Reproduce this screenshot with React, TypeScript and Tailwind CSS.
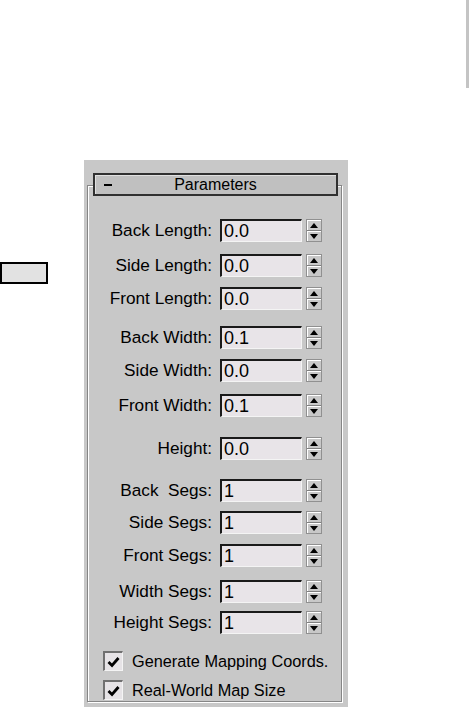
import React from "react";

const rows: { label: string; value: string; mt: string }[] = [
  { label: "Back Length:", value: "0.0", mt: "mt-[33px]" },
  { label: "Side Length:", value: "0.0", mt: "mt-[12px]" },
  { label: "Front Length:", value: "0.0", mt: "mt-[10px]" },
  { label: "Back Width:", value: "0.1", mt: "mt-[16px]" },
  { label: "Side Width:", value: "0.0", mt: "mt-[10px]" },
  { label: "Front Width:", value: "0.1", mt: "mt-[12px]" },
  { label: "Height:", value: "0.0", mt: "mt-[20px]" },
  { label: "Back  Segs:", value: "1", mt: "mt-[19px]" },
  { label: "Side Segs:", value: "1", mt: "mt-[9px]" },
  { label: "Front Segs:", value: "1", mt: "mt-[10px]" },
  { label: "Width Segs:", value: "1", mt: "mt-[13px]" },
  { label: "Height Segs:", value: "1", mt: "mt-[8px]" },
];

function Spinner() {
  return (
    <div className="flex h-[23px] w-[16px] flex-col border border-[#909090] bg-[#c8c8c8]">
      <div className="flex flex-1 items-center justify-center border-b border-[#808080] shadow-[inset_1px_1px_0_#fff]">
        <svg width="8" height="5" viewBox="0 0 8 5">
          <polygon points="4,0 8,5 0,5" fill="#000" />
        </svg>
      </div>
      <div className="flex flex-1 items-center justify-center shadow-[inset_1px_1px_0_#fff]">
        <svg width="8" height="5" viewBox="0 0 8 5">
          <polygon points="0,0 8,0 4,5" fill="#000" />
        </svg>
      </div>
    </div>
  );
}

function Row({ label, value, mt }: { label: string; value: string; mt: string }) {
  return (
    <div className={`flex h-[23px] items-center ${mt}`}>
      <div className="w-[124px] whitespace-pre text-right text-[17.2px] leading-none">{label}</div>
      <div className="ml-[8px] flex h-[23px] w-[82px] items-center border-l-2 border-t-2 border-b border-r border-l-[#1a1a1a] border-t-[#1a1a1a] border-b-[#f4f4f4] border-r-[#f4f4f4] bg-[#e8e4e8] pl-[2px] text-[18px] leading-none">
        {value}
      </div>
      <div className="ml-[4px]">
        <Spinner />
      </div>
    </div>
  );
}

function Check({ label, mt }: { label: string; mt: string }) {
  return (
    <div className={`flex h-[20px] items-center ${mt}`}>
      <div className="ml-[15px] flex h-[20px] w-[20px] items-center justify-center border-l-2 border-t-2 border-b border-r border-l-[#707070] border-t-[#707070] border-b-[#f4f4f4] border-r-[#f4f4f4] bg-[#e6e3e6]">
        <svg width="13" height="12" viewBox="0 0 13 12">
          <polyline points="1.5,6 5,9.5 11.5,2" fill="none" stroke="#000" strokeWidth="2.8" />
        </svg>
      </div>
      <div className="ml-[9px] text-[16.3px] leading-none">{label}</div>
    </div>
  );
}

export default function App() {
  return (
    <div
      className="flex h-[721px] w-[469px] items-start overflow-hidden bg-white text-black"
      style={{ fontFamily: '"Liberation Sans", Arial, sans-serif' }}
    >
      <div className="mt-[262px] h-[22px] w-[48px] border-2 border-black bg-[#e2e2e2]" />
      <div className="relative ml-[36px] mt-[160px] h-[547px] w-[264px] bg-[#c8c8c8]">
        <div className="ml-[3px] mt-[25px] h-[517px] w-[255px] border border-[#868686] shadow-[inset_1px_1px_0_#fff,1px_1px_0_#fff]">
          {rows.map((r) => (
            <Row key={r.label} {...r} />
          ))}
          <Check label="Generate Mapping Coords." mt="mt-[17px]" />
          <Check label="Real-World Map Size" mt="mt-[9px]" />
        </div>
        <div className="absolute left-[9px] top-[13px] flex h-[23px] w-[245px] items-center border-2 border-[#303030] bg-[#c0c0c0] shadow-[inset_1px_1px_0_#e0e0e0]">
          <div className="ml-[9px] h-[2px] w-[8px] bg-black" />
          <span className="flex-1 pr-[17px] text-center text-[16px] leading-none">Parameters</span>
        </div>
      </div>
      <div className="ml-auto h-[88px] w-[3px] bg-[#c4c4c4]" />
    </div>
  );
}
